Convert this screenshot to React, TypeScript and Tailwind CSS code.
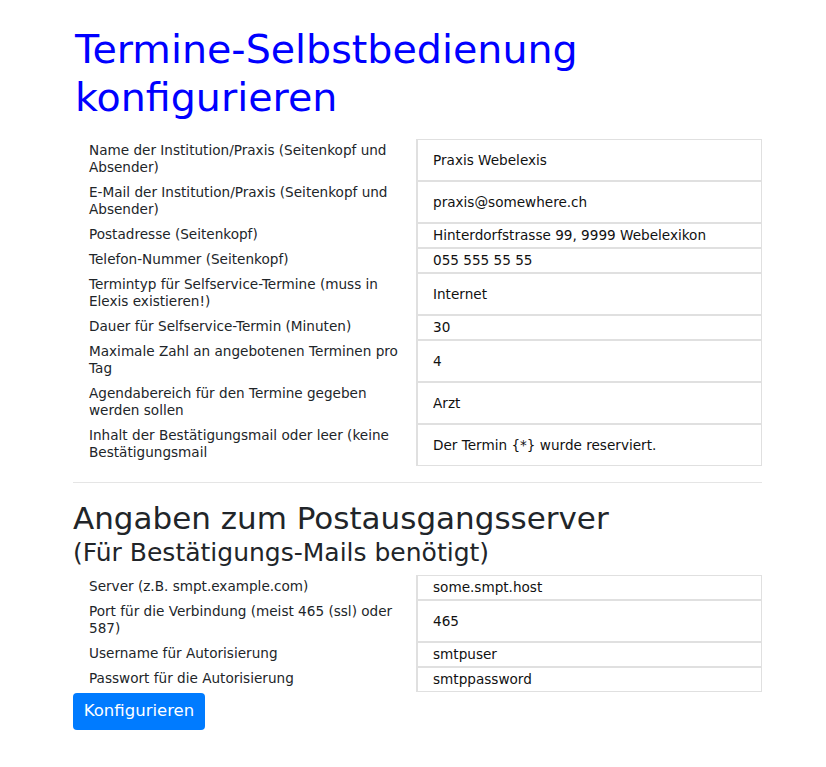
import React from "react";

type Field = { label: string; value: string };

const fields: Field[] = [
  { label: "Name der Institution/Praxis (Seitenkopf und Absender)", value: "Praxis Webelexis" },
  { label: "E-Mail der Institution/Praxis (Seitenkopf und Absender)", value: "praxis@somewhere.ch" },
  { label: "Postadresse (Seitenkopf)", value: "Hinterdorfstrasse 99, 9999 Webelexikon" },
  { label: "Telefon-Nummer (Seitenkopf)", value: "055 555 55 55" },
  { label: "Termintyp für Selfservice-Termine (muss in Elexis existieren!)", value: "Internet" },
  { label: "Dauer für Selfservice-Termin (Minuten)", value: "30" },
  { label: "Maximale Zahl an angebotenen Terminen pro Tag", value: "4" },
  { label: "Agendabereich für den Termine gegeben werden sollen", value: "Arzt" },
  { label: "Inhalt der Bestätigungsmail oder leer (keine Bestätigungsmail", value: "Der Termin {*} wurde reserviert." },
];

const mailFields: Field[] = [
  { label: "Server (z.B. smpt.example.com)", value: "some.smpt.host" },
  { label: "Port für die Verbindung (meist 465 (ssl) oder 587)", value: "465" },
  { label: "Username für Autorisierung", value: "smtpuser" },
  { label: "Passwort für die Autorisierung", value: "smtppassword" },
];

function FieldTable({ rows }: { rows: Field[] }) {
  return (
    <div className="flex flex-col">
      {rows.map((row) => (
        <div key={row.label} className="flex items-stretch">
          <div className="w-[343px] shrink-0 pl-4 pr-3 pt-[3px] pb-[5px] text-[13.6px] leading-[17px] text-[#212529]">
            {row.label}
          </div>
          <div className="flex-1 flex">
            <input
              readOnly
              value={row.value}
              className="w-full border border-[#e0e0e0] border-l-2 bg-white pl-[15px] pr-3 text-[13.6px] text-[#111] outline-none"
            />
          </div>
        </div>
      ))}
    </div>
  );
}

export default function App() {
  return (
    <div
      className="min-h-[767px] bg-white"
      style={{ fontFamily: '"DejaVu Sans", sans-serif' }}
    >
      <div className="ml-[73px] w-[689px] pt-[25px]">
        <h1 className="ml-[2px] text-[39.6px] leading-[48px] text-[#0000ff] mb-[18px]">
          Termine-Selbstbedienung
          <br />
          konfigurieren
        </h1>
        <FieldTable rows={fields} />
        <hr className="my-4 border-t border-[#e5e5e5]" />
        <h2 className="mb-[7px] text-[#212529]">
          <span className="block text-[31px] leading-[38px]">Angaben zum Postausgangsserver</span>
          <span className="block text-[25px] leading-[31px]">(Für Bestätigungs-Mails benötigt)</span>
        </h2>
        <FieldTable rows={mailFields} />
        <button className="mt-px h-[37px] w-[132px] rounded-[4px] bg-[#007bff] text-[16.5px] text-white">
          Konfigurieren
        </button>
      </div>
    </div>
  );
}
